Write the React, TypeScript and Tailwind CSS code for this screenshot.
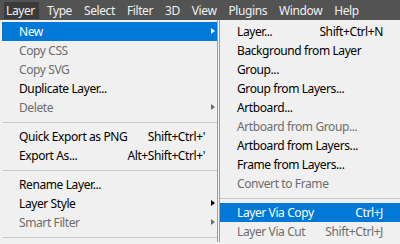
import React from "react";

type Item =
  | { sep: true }
  | {
      sep?: false;
      label: string;
      shortcut?: string;
      arrow?: boolean;
      disabled?: boolean;
      active?: boolean;
    };

const mainItems: Item[] = [
  { label: "New", arrow: true, active: true },
  { label: "Copy CSS", disabled: true },
  { label: "Copy SVG", disabled: true },
  { label: "Duplicate Layer..." },
  { label: "Delete", arrow: true, disabled: true },
  { sep: true },
  { label: "Quick Export as PNG", shortcut: "Shift+Ctrl+'" },
  { label: "Export As...", shortcut: "Alt+Shift+Ctrl+'" },
  { sep: true },
  { label: "Rename Layer..." },
  { label: "Layer Style", arrow: true },
  { label: "Smart Filter", arrow: true, disabled: true },
  { sep: true },
];

const subItems: Item[] = [
  { label: "Layer...", shortcut: "Shift+Ctrl+N" },
  { label: "Background from Layer" },
  { label: "Group..." },
  { label: "Group from Layers..." },
  { label: "Artboard..." },
  { label: "Artboard from Group...", disabled: true },
  { label: "Artboard from Layers..." },
  { label: "Frame from Layers..." },
  { label: "Convert to Frame", disabled: true },
  { sep: true },
  { label: "Layer Via Copy", shortcut: "Ctrl+J", active: true },
  { label: "Layer Via Cut", shortcut: "Shift+Ctrl+J", disabled: true },
];

const menuBar = ["Layer", "Type", "Select", "Filter", "3D", "View", "Plugins", "Window", "Help"];

function Row({ item, sub }: { item: Item; sub?: boolean }) {
  if (item.sep) {
    return (
      <div className="h-[10px] flex items-center">
        <div className={`h-px w-full bg-[#c6c6c6] ${sub ? "" : "ml-[1px]"}`} />
      </div>
    );
  }
  const color = item.active
    ? "bg-[#0078d7] text-white"
    : item.disabled
    ? "text-[#6d6d6d]"
    : "text-black";
  const arrowColor = item.active
    ? "border-l-white"
    : item.disabled
    ? "border-l-[#6d6d6d]"
    : "border-l-black";
  return (
    <div
      className={`relative h-[19px] flex items-center whitespace-nowrap pl-[17px] ${
        sub ? "pr-[17px]" : "pr-[12px]"
      } ${color}`}
    >
      <span className="flex-1">{item.label}</span>
      {item.shortcut && <span>{item.shortcut}</span>}
      {item.arrow && (
        <span
          className={`absolute right-[2px] top-[6px] w-0 h-0 border-y-[3.5px] border-y-transparent border-l-[4px] ${arrowColor}`}
        />
      )}
    </div>
  );
}

export default function App() {
  return (
    <div
      className="w-[400px] h-[244px] overflow-hidden bg-[#f0f0f0] text-[12px] leading-none tracking-[-0.4px]"
      style={{ fontFamily: '"Segoe UI", "Noto Sans", "Liberation Sans", sans-serif' }}
    >
      <div className="h-[20px] bg-[#535353] flex items-center pl-[4px] gap-[6px] text-[#f0f0f0]">
        {menuBar.map((m, i) => (
          <div
            key={m}
            className={`h-[17px] mt-[1px] flex items-center pl-[2px] pr-[4px] ${
              i === 0 ? "bg-[#3b3b3b]" : ""
            }`}
          >
            {m}
          </div>
        ))}
      </div>
      <div className="flex">
        <div className="w-[218px] border-r border-[#a0a0a0] pt-[2px] pl-[2px]">
          {mainItems.map((it, i) => (
            <Row key={i} item={it} />
          ))}
        </div>
        <div className="flex-1 ml-[1px] border-l border-[#a0a0a0] pt-[2px]">
          {subItems.map((it, i) => (
            <Row key={i} item={it} sub />
          ))}
        </div>
      </div>
    </div>
  );
}
